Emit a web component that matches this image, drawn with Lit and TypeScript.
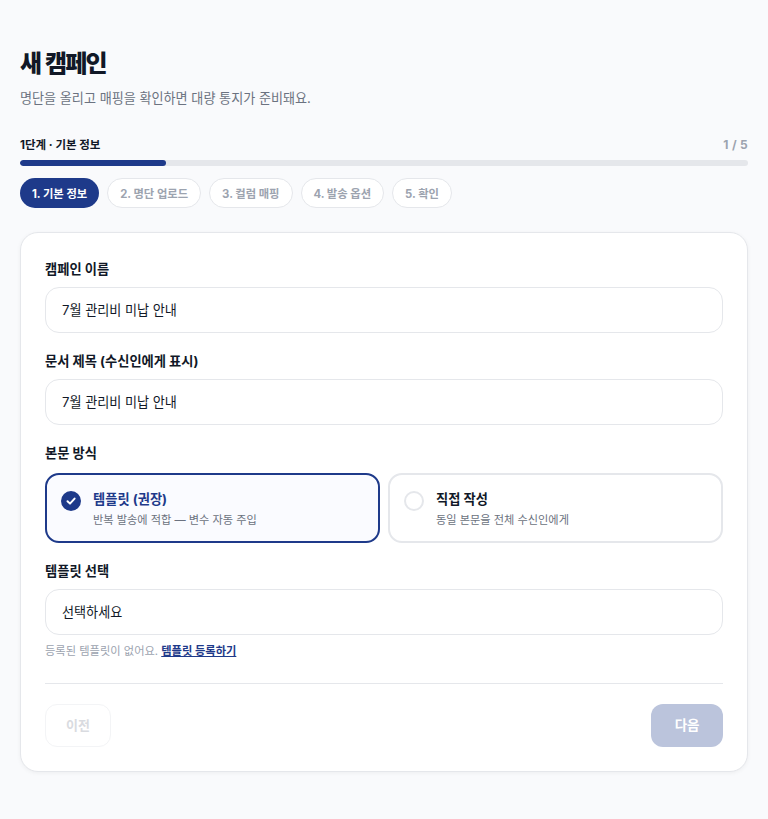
import { LitElement, html, css } from "lit";
import { customElement } from "lit/decorators.js";

@customElement("app-root")
export class AppRoot extends LitElement {
  static styles = css`
    :host { display: block; min-height: 819px; background: #f9fafc; font-family: Inter, "Noto Sans CJK KR", sans-serif; color: #111827; box-sizing: border-box; }
    * { box-sizing: border-box; }
    .page { padding: 46px 20px 48px; display: flex; flex-direction: column; }
    h1 { margin: 0; font-size: 24px; line-height: 36px; font-weight: 800; letter-spacing: -1.9px; word-spacing: 1.5px; color: #111827; }
    .sub { margin: 5px 0 0; font-size: 13.1px; line-height: 22px; color: #6b7280; }
    .prog-head { margin-top: 26px; display: flex; justify-content: space-between; align-items: center; font-size: 11.5px; line-height: 20px; font-weight: 700; }
    .prog-head .count { color: #9ca3af; font-size: 12px; letter-spacing: .3px; }
    .track { margin-top: 5px; height: 6px; border-radius: 3px; background: #e5e7eb; overflow: hidden; }
    .fill { height: 100%; width: 20%; background: #1e3a8a; border-radius: 3px; }
    .chips { margin-top: 12px; display: flex; gap: 8px; }
    .chip { height: 30px; padding: 0 12px 1px; border-radius: 15px; border: 1px solid #e5e7eb; background: #fff; color: #9ca3af; font-size: 11.3px; font-weight: 700; display: flex; align-items: center; }
    .chip.on { background: #1e3a8a; border: 0; color: #fff; }
    .card { margin-top: 24px; background: #fff; border: 1px solid #e5e7eb; border-radius: 18px; padding: 24px; box-shadow: 0 1px 4px rgba(0,0,0,.05); display: flex; flex-direction: column; }
    .field + .field { margin-top: 16px; }
    .label { display: block; font-size: 13.25px; line-height: 24px; font-weight: 700; color: #111827; margin-bottom: 6px; }
    .label.tight { margin-bottom: 0; }
    .input { height: 46px; border: 1px solid #e5e7eb; border-radius: 14px; padding: 0 16px 2px; display: flex; align-items: center; font-size: 13.1px; color: #111827; background: #fff; }
    .radios { display: grid; grid-template-columns: 1fr 1fr; gap: 8px; margin-top: 8px; }
    .radio { height: 70px; border: 2px solid #e5e7eb; border-radius: 14px; padding: 14px; display: flex; align-items: flex-start; gap: 12px; background: #fff; }
    .radio.on { border-color: #1e3a8a; background: #fafbff; }
    .dot { width: 20px; height: 20px; margin-top: 2px; border-radius: 50%; border: 2px solid #e5e7eb; flex: none; display: flex; align-items: center; justify-content: center; }
    .radio.on .dot { background: #1e3a8a; border-color: #1e3a8a; }
    .rt { font-size: 13.25px; line-height: 20px; font-weight: 700; color: #111827; }
    .radio.on .rt { color: #1e3a8a; }
    .rs { margin-top: 2px; font-size: 11.2px; line-height: 18px; color: #6b7280; }
    .hint { margin-top: 7px; font-size: 11.25px; line-height: 18px; color: #9ca3af; }
    .hint a { color: #1e3a8a; font-weight: 700; text-decoration: underline; }
    hr { border: 0; border-top: 1px solid #e5e7eb; margin: 23px 0 20px; width: 100%; }
    .actions { display: flex; justify-content: space-between; }
    .btn { height: 43px; border-radius: 12px; display: flex; align-items: center; font-weight: 700; }
    .prev { padding: 0 20px 3px; font-size: 13px; border: 1px solid #f3f4f6; color: #d9dbe0; background: #fff; }
    .next { padding: 0 23.5px 3px; font-size: 13.5px; background: #bbc4dc; color: #fff; }
  `;

  render() {
    const chips = ["1. 기본 정보", "2. 명단 업로드", "3. 컬럼 매핑", "4. 발송 옵션", "5. 확인"];
    return html`<div class="page">
      <h1>새 캠페인</h1>
      <p class="sub">명단을 올리고 매핑을 확인하면 대량 통지가 준비돼요.</p>
      <div class="prog-head"><span>1단계 · 기본 정보</span><span class="count">1 / 5</span></div>
      <div class="track"><div class="fill"></div></div>
      <div class="chips">${chips.map((c, i) => html`<div class="chip ${i === 0 ? "on" : ""}">${c}</div>`)}</div>
      <div class="card">
        <div class="field"><div class="label">캠페인 이름</div><div class="input">7월 관리비 미납 안내</div></div>
        <div class="field"><div class="label">문서 제목 (수신인에게 표시)</div><div class="input">7월 관리비 미납 안내</div></div>
        <div class="field"><div class="label tight">본문 방식</div>
          <div class="radios">
            <div class="radio on"><span class="dot"><svg width="12" height="12" viewBox="0 0 12 12" fill="none"><path d="M2.5 6.2 5 8.6 9.6 3.6" stroke="#fff" stroke-width="2" stroke-linecap="round" stroke-linejoin="round"/></svg></span>
              <div><div class="rt">템플릿 (권장)</div><div class="rs">반복 발송에 적합 — 변수 자동 주입</div></div></div>
            <div class="radio"><span class="dot"></span>
              <div><div class="rt">직접 작성</div><div class="rs">동일 본문을 전체 수신인에게</div></div></div>
          </div>
        </div>
        <div class="field"><div class="label">템플릿 선택</div><div class="input">선택하세요</div>
          <div class="hint">등록된 템플릿이 없어요. <a>템플릿 등록하기</a></div></div>
        <hr />
        <div class="actions"><div class="btn prev">이전</div><div class="btn next">다음</div></div>
      </div>
    </div>`;
  }
}
